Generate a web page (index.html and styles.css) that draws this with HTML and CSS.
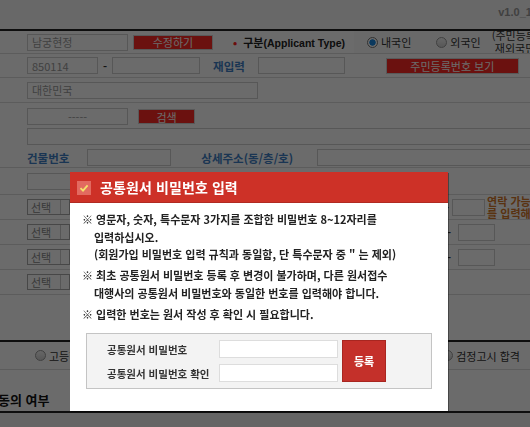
FILE: index.html
```html
<!DOCTYPE html>
<html lang="ko">
<head>
<meta charset="utf-8">
<title>공통원서 비밀번호 입력</title>
<link rel="stylesheet" href="styles.css">
</head>
<body>
<div class="page">
  <div class="topbar"><span class="ver">v1.0_16</span></div>
  <div class="form">
    <div class="row r1">
      <span class="inp w101">남궁현정</span>
      <span class="btn b-edit">수정하기</span>
      <span class="lbl-type"><i class="dot">•</i> 구분<span class="en">(Applicant Type)</span></span>
      <div class="radiocell">
        <label class="radio"><span class="rc on"></span>내국인</label>
        <label class="radio r-out"><span class="rc"></span>외국인</label>
        <span class="note">(주민등록<br>&nbsp;재외국민</span>
      </div>
    </div>
    <div class="row r2">
      <span class="inp w71">850114</span>
      <span class="dash">-</span>
      <span class="inp w88"></span>
      <span class="blue re">재입력</span>
      <span class="inp w87"></span>
      <span class="btn b-view">주민등록번호 보기</span>
    </div>
    <div class="row r3">
      <span class="inp w231">대한민국</span>
    </div>
    <div class="row r4">
      <div class="line">
        <span class="inp w101 center">-----</span>
        <span class="btn b-search">검색</span>
      </div>
      <div class="line"><span class="inp wfull"></span></div>
      <div class="line">
        <span class="blue bno">건물번호</span>
        <span class="inp w84"></span>
        <span class="blue detail">상세주소(동/층/호)</span>
        <span class="inp wdet"></span>
      </div>
    </div>
    <div class="row r5"><span class="inp w300"></span></div>
    <div class="row rs">
      <span class="sel">선택<b></b></span>
      <span class="right"><span class="dash">-</span><span class="inp w33"></span><span class="orange">연락 가능<br>를 입력해</span></span>
    </div>
    <div class="row rs">
      <span class="sel">선택<b></b></span>
      <span class="right r2r"><span class="dash">-</span><span class="inp w37"></span></span>
    </div>
    <div class="row rs">
      <span class="sel">선택<b></b></span>
      <span class="right r2r"><span class="dash">-</span><span class="inp w37"></span></span>
    </div>
    <div class="row rs">
      <span class="sel">선택<b></b></span>
    </div>
    <div class="row rblank"></div>
    <div class="row redu">
      <label class="radio"><span class="rc"></span>고등학교 졸업</label>
      <label class="radio r-geom"><span class="rc"></span>검정고시 합격</label>
    </div>
    <div class="agree">동의 여부</div>
    <div class="foot"></div>
  </div>
</div>

<div class="overlay"></div>

<div class="modal">
  <div class="m-head">
    <span class="chk"><svg width="14" height="14" viewBox="0 0 14 14"><rect x="0" y="0" width="14" height="14" fill="#e26a60"/><path d="M3.5 7.2 L6 9.6 L10.6 4.4" fill="none" stroke="#f4e36a" stroke-width="1.8"/></svg></span>
    <span class="m-title">공통원서 비밀번호 입력</span>
  </div>
  <div class="m-body">
    <p class="t">※ 영문자, 숫자, 특수문자 3가지를 조합한 비밀번호 8~12자리를<br><span class="ind">입력하십시오.</span><br><span class="ind">(회원가입 비밀번호 입력 규칙과 동일함, 단 특수문자 중 " 는 제외)</span></p>
    <p class="t">※ 최초 공통원서 비밀번호 등록 후 변경이 불가하며, 다른 원서접수<br><span class="ind">대행사의 공통원서 비밀번호와 동일한 번호를 입력해야 합니다.</span></p>
    <p class="t">※ 입력한 번호는 원서 작성 후 확인 시 필요합니다.</p>
    <div class="pwbox">
      <div class="fields">
        <div class="f"><span class="fl">공통원서 비밀번호</span><span class="fi"></span></div>
        <div class="f"><span class="fl">공통원서 비밀번호 확인</span><span class="fi"></span></div>
      </div>
      <span class="reg">등록</span>
    </div>
  </div>
</div>
</body>
</html>
```

FILE: styles.css
```css
* { box-sizing: border-box; }
html, body { margin: 0; padding: 0; }
body {
  width: 530px;
  height: 427px;
  overflow: hidden;
  background: #e4e4e4;
  font-family: "Noto Sans CJK KR", "Noto Sans", sans-serif;
  font-size: 11px;
  color: #333;
}
.page { width: 530px; height: 427px; background: #fff; overflow: hidden; }
.topbar {
  height: 31px;
  background: #f8f8f8;
  border-bottom: 2px solid #222;
  display: flex;
  justify-content: flex-end;
  align-items: flex-start;
  overflow: hidden;
}
.ver { font-family: "Liberation Sans", sans-serif; font-weight: bold; font-size: 11px; color: #9a9a9a; margin-right: -8px; margin-top: 6px; }
.form { width: 530px; }
.row {
  display: flex;
  align-items: center;
  padding-left: 27px;
  border-bottom: 1px solid #dcdcdc;
  white-space: nowrap;
  overflow: hidden;
}
.inp {
  display: inline-flex;
  align-items: center;
  height: 17px;
  border: 1px solid #cfcfcf;
  background: #fff;
  padding-left: 4px;
  font-size: 11px;
  color: #9a9a9a;
  flex: none;
}
.center { justify-content: center; padding-left: 0; }
.w101 { width: 101px; }
.w71 { width: 71px; }
.w88 { width: 88px; }
.w87 { width: 87px; }
.w231 { width: 231px; }
.w84 { width: 84px; }
.w300 { width: 300px; }
.w33 { width: 33px; }
.w37 { width: 37px; }
.wfull { width: 510px; }
.wdet { width: 220px; }
.btn {
  display: inline-flex;
  align-items: center;
  justify-content: center;
  height: 15px;
  background: #ff2a24;
  border: 1px solid #d4d4d4;
  color: #fff;
  font-size: 11px;
  flex: none;
}
.b-edit { width: 80px; margin-left: 5px; }
.b-view { width: 133px; margin-left: 41px; height: 16px; }
.b-search { width: 57px; margin-left: 10px; }
.r1 { height: 23px; }
.lbl-type { margin-left: 20px; font-weight: bold; font-size: 11px; color: #222; flex: none; }
.en { font-family: "Liberation Sans", sans-serif; font-size: 10.5px; font-weight: bold; }
.dot { color: #ff2020; font-style: normal; margin-right: 3px; }
.radiocell {
  margin-left: 9px;
  align-self: stretch;
  flex: none;
  width: 200px;
  background: #fbfbfb;
  display: flex;
  align-items: center;
  padding-left: 13px;
}
.radio { display: inline-flex; align-items: center; font-size: 11px; color: #333; }
.rc {
  width: 11px; height: 11px;
  border-radius: 50%;
  border: 1px solid #999;
  background: linear-gradient(#f4f4f4, #d0d0d0);
  margin-right: 3px;
}
.rc.on { background: radial-gradient(circle, #1c88e0 45%, #fff 55%); border-color: #777; }
.r-out { margin-left: 25px; }
.note { margin-left: 11px; font-size: 11px; line-height: 13px; color: #333; }
.r2 { height: 24px; }
.dash { margin: 0 5px; color: #333; font-weight: bold; }
.blue { color: #3f7fc6; font-weight: bold; font-size: 11.5px; }
.re { margin-left: 13px; margin-right: 13px; }
.r3 { height: 25px; }
.r4 {
  height: 65px;
  flex-direction: column;
  align-items: flex-start;
  justify-content: flex-start;
  padding-top: 5px;
  gap: 2px;
}
.line { display: flex; align-items: center; height: 17px; }
.line:nth-child(1) { height: 17px; margin-bottom: 1px; }
.line:nth-child(3) { margin-top: 2px; }
.bno { margin-right: 18px; }
.detail { margin-left: 30px; margin-right: 24px; }
.r5 { height: 27px; }
.rs { height: 25px; position: relative; }
.sel {
  width: 43px;
  height: 16px;
  border: 1px solid #aaa;
  background: #fff;
  font-size: 11px;
  color: #888;
  padding-left: 3px;
  line-height: 14px;
  position: relative;
}
.sel b { position: absolute; right: 0; top: 0; width: 9px; height: 14px; border-left: 1px solid #ccc; }
.right { margin-left: auto; display: flex; align-items: center; width: 85px; }
.right .dash { margin: 0 3px 0 0; }
.r2r .dash { margin-right: 7px; margin-left: 2px; }
.orange { color: #d4782a; font-weight: bold; font-size: 11px; line-height: 12px; margin-left: 2px; }
.rblank { height: 47px; border-bottom: 2px solid #222; }
.redu { height: 28px; padding-left: 35px; }
.r-geom { margin-left: auto; margin-right: 10px; }
.agree {
  height: 43px;
  border-bottom: 2px solid #222;
  font-weight: bold;
  font-size: 13px;
  line-height: 16px;
  color: #111;
  padding-top: 22px;
  margin-left: -2px;
}
.foot { height: 20px; background: #f0f0f0; }

.overlay {
  position: fixed;
  inset: 0;
  background: rgba(0, 0, 0, 0.58);
}

.modal {
  position: absolute;
  left: 70px;
  top: 172px;
  width: 378px;
  height: 239px;
  background: #fff;
  box-shadow: 1px 1px 0 rgba(0,0,0,0.35);
}
.m-head {
  height: 31px;
  background: #cd3127;
  border-bottom: 1px solid #b02a22;
  display: flex;
  align-items: center;
  padding-left: 7px;
}
.chk { width: 14px; height: 14px; display: block; margin-top: 1px; }
.chk svg { display: block; }
.m-title { margin-left: 9px; color: #fff; font-size: 14px; font-weight: 700; letter-spacing: 0.1px; }
.m-body { padding: 8px 0 0 12px; }
.t {
  margin: 0 0 3.5px 0;
  font-size: 11px;
  font-weight: bold;
  line-height: 17.5px;
  color: #222;
  white-space: nowrap;
}
.ind { padding-left: 12px; }
.pwbox {
  margin-top: 10px;
  margin-left: 4px;
  width: 346px;
  height: 56px;
  border: 1px solid #c4c4c4;
  background: #f3f3f3;
  display: flex;
  align-items: center;
  padding-left: 20px;
}
.fields { display: flex; flex-direction: column; gap: 6px; }
.f { display: flex; align-items: center; height: 18px; }
.fl { width: 112px; font-size: 10.5px; font-weight: bold; color: #333; }
.fi { width: 119px; height: 18px; border: 1px solid #ddd; background: #fff; }
.reg {
  margin-left: 4px;
  width: 44px;
  height: 42px;
  background: #c4302a;
  border: 1px solid #a82620;
  color: #fff;
  font-weight: bold;
  font-size: 11px;
  display: flex;
  align-items: center;
  justify-content: center;
}
```
